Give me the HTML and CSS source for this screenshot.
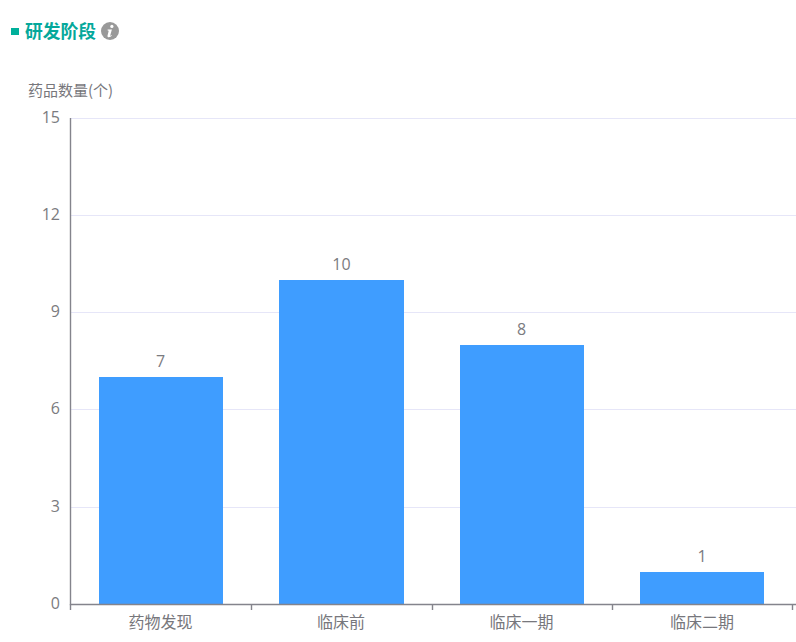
FILE: index.html
```html
<!DOCTYPE html>
<html lang="zh-CN">
<head>
<meta charset="utf-8">
<title>研发阶段</title>
<link rel="stylesheet" href="styles.css">
</head>
<body>
<section class="panel">
  <header class="heading">
    <span class="marker"></span>
    <h2 class="title">研发阶段</h2>
    <svg class="info" width="18" height="18" viewBox="0 0 18 18" aria-hidden="true">
      <circle cx="9" cy="9" r="9" fill="#999"/>
      <circle cx="10.900" cy="4.400" r="1.600" fill="#fff"/>
      <path d="M6.600 7.400h4.300l-1.700 6c-.1.400.2.500.5.300l1-.6.200.500c-1 1-2 1.600-3.100 1.600-1 0-1.500-.6-1.300-1.500l1.100-4.400c.1-.5-.2-.7-1-.8z" fill="#fff"/>
    </svg>
  </header>
  <svg class="chart" width="796" height="580" viewBox="0 62 796 580" role="img">
    <text class="label axis-name" x="28" y="96">药品数量(个)</text>
    <g class="grid">
      <path d="M71 118.500H796"/>
      <path d="M71 215.500H796"/>
      <path d="M71 312.500H796"/>
      <path d="M71 409.500H796"/>
      <path d="M71 507.500H796"/>
    </g>
    <g class="label y-labels">
      <text x="60" y="123">15</text>
      <text x="60" y="220">12</text>
      <text x="60" y="317">9</text>
      <text x="60" y="414">6</text>
      <text x="60" y="512">3</text>
      <text x="60" y="609">0</text>
    </g>
    <g class="bars">
      <rect x="99" y="377" width="124" height="227"/>
      <rect x="279" y="280" width="125" height="324"/>
      <rect x="460" y="345" width="124" height="259"/>
      <rect x="640" y="572" width="124" height="32"/>
    </g>
    <g class="axis">
      <path d="M70.500 118V604.500H796"/>
      <path d="M70.500 604V610M251.500 604V610M432.500 604V610M612.500 604V610M792.500 604V610"/>
    </g>
    <g class="label values">
      <text x="160.500" y="367">7</text>
      <text x="341.500" y="270">10</text>
      <text x="521.500" y="335">8</text>
      <text x="702" y="562">1</text>
    </g>
    <g class="label categories">
      <text x="160.500" y="628">药物发现</text>
      <text x="341" y="628">临床前</text>
      <text x="521.500" y="628">临床一期</text>
      <text x="702" y="628">临床二期</text>
    </g>
  </svg>
</section>
</body>
</html>
```
FILE: styles.css
```css
html, body {
  margin: 0;
  padding: 0;
  background: #fff;
  overflow: hidden;
}
.panel {
  width: 796px;
  height: 642px;
  font-family: "Noto Sans CJK SC", "Noto Sans", sans-serif;
}
.heading {
  display: flex;
  align-items: center;
  height: 62px;
  padding-left: 11px;
  box-sizing: border-box;
}
.marker {
  width: 8px;
  height: 7px;
  background: #00b09b;
  margin: 1px 6px 0 0;
}
.title {
  margin: 0 5px 2px 0;
  width: 71px;
  white-space: nowrap;
  font-size: 17.750px;
  line-height: 26px;
  font-weight: 700;
  color: #05a89b;
}
.info { display: block; }
.chart { display: block; }
.label {
  font-family: "Open Sans", "Noto Sans CJK SC", sans-serif;
  fill: #7b7b80;
}
.axis-name { font-family: "Noto Sans CJK SC", sans-serif; font-size: 15px; font-weight: 400; fill: #77777c; }
.y-labels { font-size: 16px; text-anchor: end; }
.values { font-size: 16px; text-anchor: middle; }
.categories { font-family: "Noto Sans CJK SC", sans-serif; font-size: 16px; font-weight: 400; text-anchor: middle; fill: #77777c; }
.grid path { stroke: #e6e6f8; stroke-width: 1; fill: none; }
.bars rect { fill: #3f9dff; }
.axis path { stroke: #84848c; stroke-width: 1.400; fill: none; }
```
